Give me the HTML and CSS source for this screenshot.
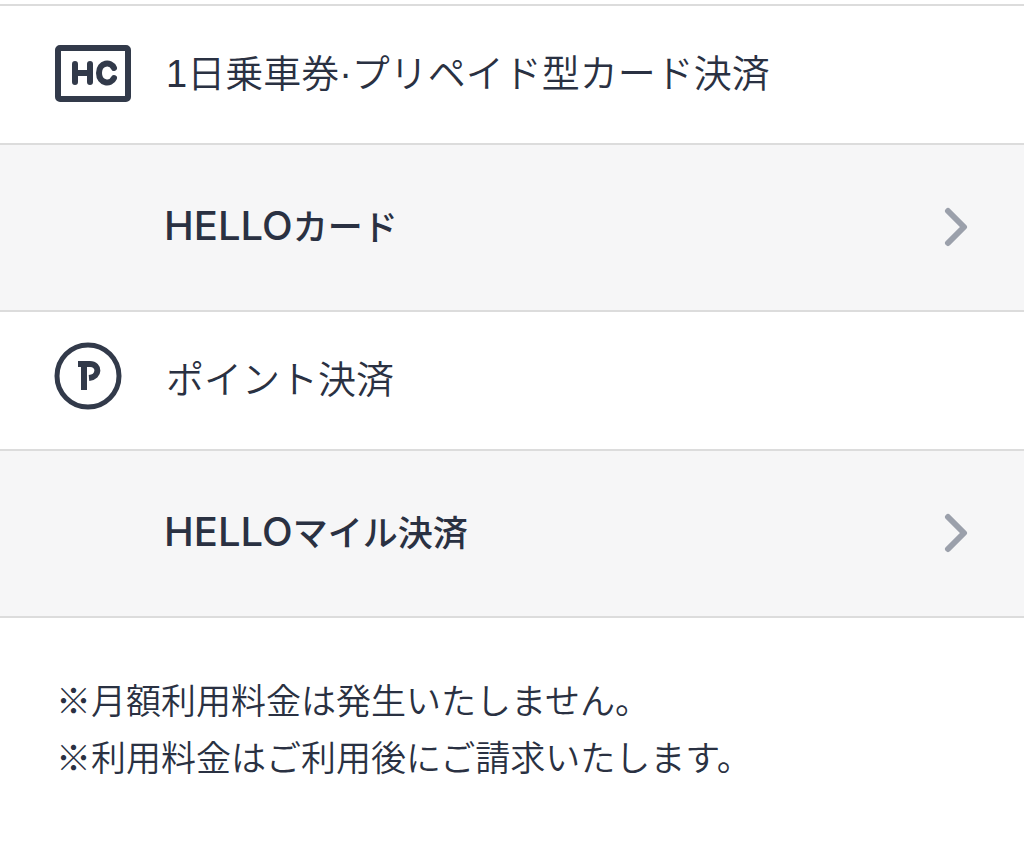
FILE: index.html
```html
<!DOCTYPE html>
<html lang="ja">
<head>
    <meta charset="UTF-8">
    <meta name="viewport" content="width=device-width, initial-scale=1.0">
    <title>決済方法</title>
    <link rel="stylesheet" href="styles.css">
</head>
<body>
    <main class="payment">
        <section class="group">
            <h2 class="group-title">
                <span class="icon">
                    <svg width="78" height="74" viewBox="0 0 78 74" aria-hidden="true">
                        <rect x="4" y="12" width="70" height="51" rx="2" fill="none" stroke="#323a4a" stroke-width="6"/>
                        <path d="M21 28V46M36 28V46M21 37H36" fill="none" stroke="#323a4a" stroke-width="6" stroke-linecap="round"/>
                        <path d="M60 32C57 25 45 26 45 37S57 49 60 42" fill="none" stroke="#323a4a" stroke-width="6" stroke-linecap="round"/>
                    </svg>
                </span>
                <span>1日乗車券·プリペイド型カード決済</span>
            </h2>
            <a class="item" href="#hello-card">
                <span class="item-name">HELLO<span class="kana">カード</span></span>
                <svg class="arrow" width="24" height="40" viewBox="0 0 24 40" aria-hidden="true">
                    <path d="M4 4L20 20L4 36" fill="none" stroke="#9ba0ab" stroke-width="6" stroke-linecap="round" stroke-linejoin="round"/>
                </svg>
            </a>
        </section>

        <section class="group">
            <h2 class="group-title">
                <span class="icon">
                    <svg width="68" height="68" viewBox="0 0 68 68" aria-hidden="true">
                        <circle cx="34" cy="34" r="31" fill="none" stroke="#323a4a" stroke-width="5"/>
                        <path d="M24 22H36C46 22 46 35 35 36" fill="none" stroke="#323a4a" stroke-width="6"/>
                        <path d="M30 22V48" fill="none" stroke="#323a4a" stroke-width="6"/>
                    </svg>
                </span>
                <span>ポイント決済</span>
            </h2>
            <a class="item" href="#hello-mile">
                <span class="item-name">HELLO<span class="kana">マイル決済</span></span>
                <svg class="arrow" width="24" height="40" viewBox="0 0 24 40" aria-hidden="true">
                    <path d="M4 4L20 20L4 36" fill="none" stroke="#9ba0ab" stroke-width="6" stroke-linecap="round" stroke-linejoin="round"/>
                </svg>
            </a>
        </section>

        <div class="notes">
            <p>※月額利用料金は発生いたしません。</p>
            <p>※利用料金はご利用後にご請求いたします。</p>
        </div>
    </main>
</body>
</html>
```

FILE: styles.css
```css
* {
    box-sizing: border-box;
}

body {
    margin: 0;
    padding-top: 4px;
    background: #fff;
    color: #2a3142;
    font-family: "Noto Sans CJK JP", sans-serif;
}

.group-title {
    display: flex;
    align-items: flex-start;
    margin: 0;
    padding: 30px 54px 30px;
    border-top: 2px solid #dcdcdc;
    font-family: "Liberation Sans", "Noto Sans CJK JP", sans-serif;
    font-size: 38px;
    font-weight: 350;
    line-height: 77px;
}

.icon {
    display: flex;
    flex: none;
    align-items: flex-start;
    width: 112px;
}

.item {
    display: flex;
    align-items: center;
    justify-content: space-between;
    padding: 46px 56px 48px 164px;
    border-top: 2px solid #dcdcdc;
    background: #f6f6f7;
    color: inherit;
    text-decoration: none;
}

.item-name {
    font-family: Inter, "Noto Sans CJK JP", sans-serif;
    font-size: 40px;
    font-weight: 500;
    line-height: 69px;
}

.kana {
    font-size: 35px;
}

.arrow {
    flex: none;
}

.notes {
    padding: 52px 56px;
    border-top: 2px solid #dcdcdc;
    font-size: 35px;
    font-weight: 350;
    line-height: 57px;
}

.notes p {
    margin: 0;
}
```
